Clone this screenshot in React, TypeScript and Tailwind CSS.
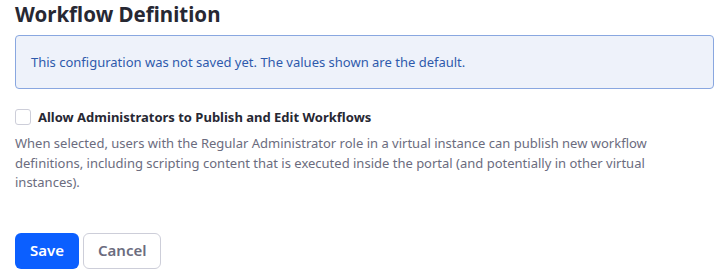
export default function App() {
  return (
    <div
      className="w-[719px] h-[274px] bg-white px-[15px] overflow-hidden"
      style={{ fontFamily: '"Noto Sans", sans-serif' }}
    >
      <h2 className="m-0 text-[20.5px] leading-[28px] font-bold text-[#272833]">
        Workflow Definition
      </h2>
      <div className="mt-[7px] w-[699px] rounded-[4px] border border-[#89a7e0] bg-[#eef2fa] px-[15px] py-[16px] text-[13px] leading-[20px] text-[#2e5aac]">
        This configuration was not saved yet. The values shown are the default.
      </div>
      <label className="mt-[18px] flex items-center gap-[7px]">
        <span className="block h-[16px] w-[16px] rounded-[3px] border border-[#cdced9] bg-white" />
        <span className="text-[13px] leading-[20px] font-bold text-[#272833]">
          Allow Administrators to Publish and Edit Workflows
        </span>
      </label>
      <p className="mt-[7px] w-[690px] text-[13px] leading-[19.5px] text-[#6b6c7e]">
        When selected, users with the Regular Administrator role in a virtual instance can publish new workflow
        definitions, including scripting content that is executed inside the portal (and potentially in other virtual
        instances).
      </p>
      <div className="mt-[40px] flex gap-[4px]">
        <button className="h-[36px] rounded-[6px] bg-[#0b5fff] px-[15px] text-[15px] font-semibold text-white">
          Save
        </button>
        <button className="h-[36px] rounded-[6px] border border-[#cdced9] bg-white px-[14px] text-[15px] font-semibold text-[#6b6c7e]">
          Cancel
        </button>
      </div>
    </div>
  );
}
